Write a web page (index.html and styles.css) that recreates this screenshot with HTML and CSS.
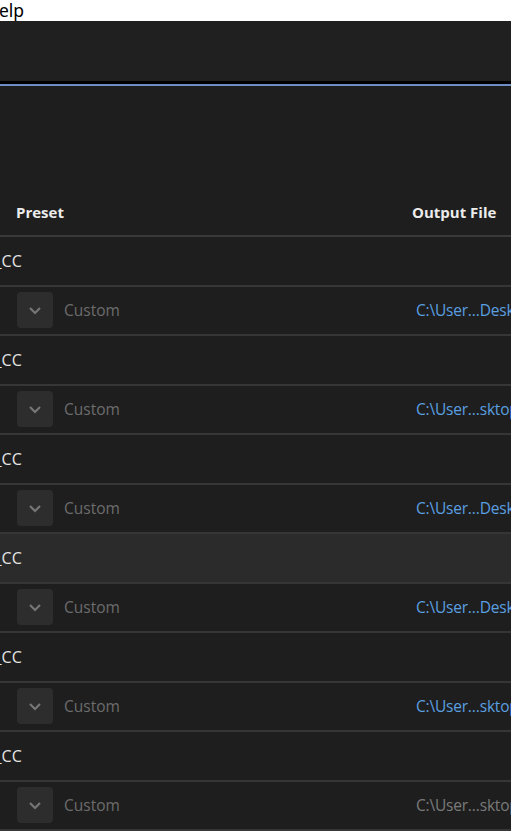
FILE: index.html
```html
<!DOCTYPE html>
<html>
<head>
<meta charset="utf-8">
<link rel="stylesheet" href="styles.css">
</head>
<body>
<div class="menubar"><span class="menu-item">Help</span></div>
<div class="toolbar"></div>
<div class="divider"></div>
<div class="spacer"></div>
<div class="table">
  <div class="head">
    <div class="col-preset">Preset</div>
    <div class="col-output">Output File</div>
  </div>
  <div class="row group"><span class="name">Seq_CC</span></div>
  <div class="row item">
    <div class="preset"><span class="dd"><svg width="14" height="9" viewBox="0 0 14 9"><path d="M2 2 L7 7 L12 2" fill="none" stroke="#767676" stroke-width="2.2"/></svg></span><span class="custom">Custom</span></div>
    <div class="path">C:\User…Desktop</div>
  </div>
  <div class="row group"><span class="name">Seq_CC</span></div>
  <div class="row item">
    <div class="preset"><span class="dd"><svg width="14" height="9" viewBox="0 0 14 9"><path d="M2 2 L7 7 L12 2" fill="none" stroke="#767676" stroke-width="2.2"/></svg></span><span class="custom">Custom</span></div>
    <div class="path">C:\User…sktop</div>
  </div>
  <div class="row group"><span class="name">Seq_CC</span></div>
  <div class="row item">
    <div class="preset"><span class="dd"><svg width="14" height="9" viewBox="0 0 14 9"><path d="M2 2 L7 7 L12 2" fill="none" stroke="#767676" stroke-width="2.2"/></svg></span><span class="custom">Custom</span></div>
    <div class="path">C:\User…Desktop</div>
  </div>
  <div class="row group hl"><span class="name">Seq_CC</span></div>
  <div class="row item">
    <div class="preset"><span class="dd"><svg width="14" height="9" viewBox="0 0 14 9"><path d="M2 2 L7 7 L12 2" fill="none" stroke="#767676" stroke-width="2.2"/></svg></span><span class="custom">Custom</span></div>
    <div class="path">C:\User…Desktop</div>
  </div>
  <div class="row group"><span class="name">Seq_CC</span></div>
  <div class="row item">
    <div class="preset"><span class="dd"><svg width="14" height="9" viewBox="0 0 14 9"><path d="M2 2 L7 7 L12 2" fill="none" stroke="#767676" stroke-width="2.2"/></svg></span><span class="custom">Custom</span></div>
    <div class="path">C:\User…sktop</div>
  </div>
  <div class="row group"><span class="name">Seq_CC</span></div>
  <div class="row item">
    <div class="preset"><span class="dd"><svg width="14" height="9" viewBox="0 0 14 9"><path d="M2 2 L7 7 L12 2" fill="none" stroke="#767676" stroke-width="2.2"/></svg></span><span class="custom">Custom</span></div>
    <div class="path dim">C:\User…sktop</div>
  </div>
</div>
</body>
</html>
```
FILE: styles.css
```css
html, body {
  margin: 0;
  padding: 0;
  background: #1e1e1e;
  overflow: hidden;
  width: 511px;
  height: 831px;
  font-family: "Open Sans", "Noto Sans", sans-serif;
}
.menubar {
  height: 21px;
  background: #ffffff;
  overflow: hidden;
  white-space: nowrap;
}
.menu-item {
  display: inline-block;
  margin-left: -14px;
  font-family: "Noto Sans", sans-serif;
  font-size: 17.5px;
  line-height: 17px;
  color: #000;
}
.toolbar {
  height: 60px;
  background: #202020;
}
.divider {
  height: 3px;
  background: #000;
  border-bottom: 2px solid #6f8cc4;
}
.spacer {
  height: 102px;
}
.table {
  white-space: nowrap;
}
.head {
  display: grid;
  grid-template-columns: 412px 1fr;
  height: 47px;
  align-items: center;
  border-bottom: 2px solid #3a3a3a;
  color: #ececec;
  font-weight: 700;
  font-size: 15px;
}
.col-preset {
  padding-left: 16px;
}
.row {
  height: 47.5px;
  border-bottom: 2px solid #363636;
  display: flex;
  align-items: center;
  overflow: hidden;
}
.group {
  color: #e4e4e4;
  font-size: 16px;
}
.group .name {
  margin-left: -33px;
}
.hl {
  background: #2b2b2b;
}
.item {
  display: grid;
  grid-template-columns: 416px 1fr;
}
.preset {
  display: flex;
  align-items: center;
  padding-left: 17px;
  gap: 11px;
}
.dd {
  width: 36px;
  height: 36px;
  border-radius: 4px;
  background: #2d2d2d;
  display: flex;
  align-items: center;
  justify-content: center;
}
.custom {
  color: #6c6c6c;
  font-size: 15.5px;
}
.path {
  color: #5a9fe0;
  font-size: 15.5px;
  letter-spacing: -0.2px;
}
.path.dim {
  color: #7a7a7a;
}
```
